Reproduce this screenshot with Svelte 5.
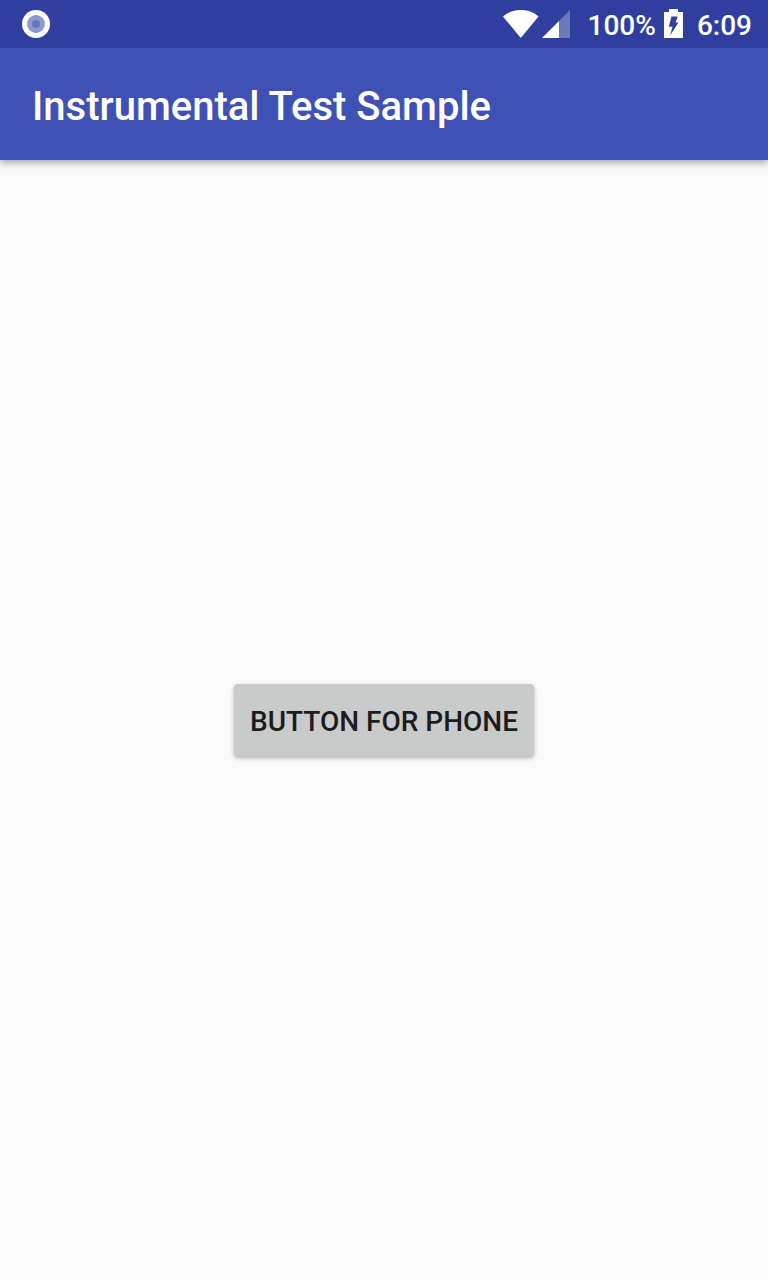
<script>
  const battery = '100%';
  const time = '6:09';
</script>

<div class="screen">
  <header class="status">
    <svg width="28" height="28" viewBox="0 0 28 28" aria-hidden="true">
      <circle cx="14" cy="14" r="14" fill="#fff" />
      <circle cx="14" cy="14" r="9" fill="#8f98cd" />
      <circle cx="14" cy="14" r="4" fill="#6874bc" />
    </svg>
    <div class="indicators">
      <svg width="36" height="28" viewBox="0 0 36 28" aria-hidden="true">
        <path d="M0 6.5C5 2 11 0 17.8 0s12.700 2 17.700 6.500L17.800 28z" fill="#fff" />
      </svg>
      <svg class="signal" width="28" height="28" viewBox="0 0 28 28" aria-hidden="true">
        <path d="M28 0v28H17V11z" fill="#fff" fill-opacity=".3" />
        <path d="M17 11v17H0z" fill="#fff" />
      </svg>
      <span class="percent">{battery}</span>
      <svg class="battery" width="19" height="30" viewBox="0 0 19 30" aria-hidden="true">
        <path fill-rule="evenodd" d="M5 0h9v3h5v26H0V3h5zM7.500 7.500L4.800 17.800h3.700L6 26.500l8.500-13h-3l2.200-6z" fill="#fff" />
      </svg>
      <span>{time}</span>
    </div>
  </header>
  <div class="appbar"><h1>Instrumental Test Sample</h1></div>
  <main><button type="button">BUTTON FOR PHONE</button></main>
</div>

<style>
  :global(body) { margin: 0; background: #fafafa; }
  .screen { min-height: 100vh; display: flex; flex-direction: column; font-family: Roboto, sans-serif; font-weight: 500; }
  .status { position: relative; z-index: 1; height: 48px; box-sizing: border-box; padding: 0 16px 0 22px; display: flex; align-items: center; justify-content: space-between; background: #303f9f; color: #fff; font-size: 28px; line-height: 44px; }
  svg { display: block; }
  .indicators { display: flex; align-items: center; }
  .indicators span { padding-top: 4px; }
  .signal { margin-left: 3px; }
  .percent { margin-left: 18px; }
  .battery { margin: 0 14px 0 8px; }
  .appbar { height: 112px; box-sizing: border-box; padding: 6px 32px 0; display: flex; align-items: center; background: #3f51b5; color: #fff; box-shadow: 0 2px 8px rgba(0, 0, 0, .4); }
  h1 { margin: 0; font-size: 40px; font-weight: 500; line-height: 48px; }
  main { flex: 1; display: flex; align-items: center; justify-content: center; }
  button { border: 0; border-radius: 4px; padding: 20px 16px 16px; font: 500 28px/36px Roboto, sans-serif; color: #1c1c1c; background: #c9cbca; box-shadow: 0 2px 4px rgba(0, 0, 0, .3); }
</style>
